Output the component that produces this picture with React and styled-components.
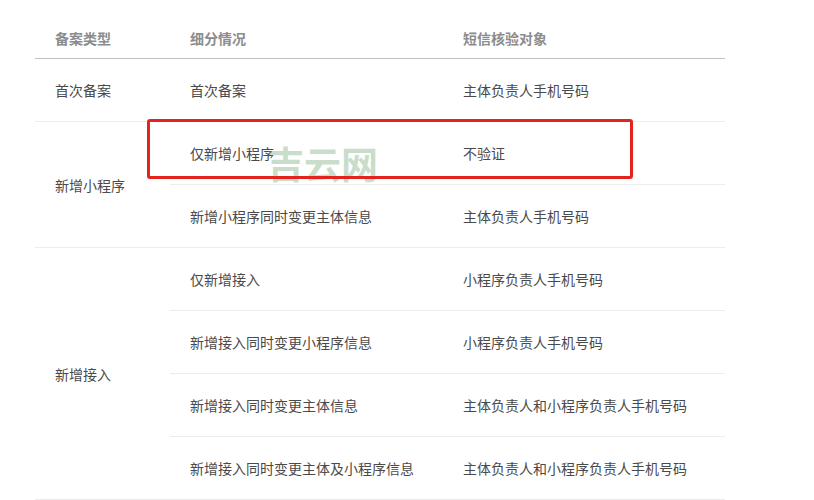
import React from "react";
import styled, { createGlobalStyle } from "styled-components";

const GlobalStyle = createGlobalStyle`
  html, body {
    margin: 0;
    padding: 0;
    background: #fff;
  }
  body {
    font-family: "Noto Sans CJK SC", "Microsoft YaHei", sans-serif;
    font-size: 14px;
    color: #4a4a4a;
  }
`;

const Page = styled.div`
  padding: 17px 89px 0 35px;
  width: 690px;
`;

const Header = styled.div`
  display: flex;
  height: 41px;
  align-items: center;
  border-bottom: 1px solid #bfbfbf;
  color: #8c8c8c;
  font-weight: 700;
`;

const HeadCell = styled.div`
  width: ${(p) => p.$w}px;
  padding-left: 20px;
  box-sizing: border-box;
`;

const Group = styled.div`
  display: flex;
  border-bottom: 1px solid #ececec;
`;

const GroupLabel = styled.div`
  width: 135px;
  padding-left: 20px;
  box-sizing: border-box;
  display: flex;
  align-items: center;
`;

const SubRows = styled.div`
  flex: 1;
  display: flex;
  flex-direction: column;
`;

const SubRow = styled.div`
  position: relative;
  display: flex;
  align-items: center;
  height: 62px;
  & + & {
    border-top: 1px solid #ececec;
  }
`;

const Cell = styled.div`
  width: ${(p) => p.$w}px;
  padding-left: 20px;
  box-sizing: border-box;
  white-space: nowrap;
`;

const Highlight = styled.div`
  position: absolute;
  left: -23px;
  top: -3px;
  width: 486px;
  height: 60px;
  box-sizing: border-box;
  border: 3px solid #e3241e;
  border-radius: 3px;
  pointer-events: none;
`;

const Watermark = styled.div`
  position: absolute;
  left: 97px;
  top: 21px;
  font-size: 37px;
  line-height: 40px;
  font-weight: 700;
  color: rgba(110, 165, 115, 0.38);
  pointer-events: none;
`;

const groups = [
  { label: "首次备案", rows: [["首次备案", "主体负责人手机号码"]] },
  {
    label: "新增小程序",
    rows: [
      ["仅新增小程序", "不验证", true],
      ["新增小程序同时变更主体信息", "主体负责人手机号码"],
    ],
  },
  {
    label: "新增接入",
    rows: [
      ["仅新增接入", "小程序负责人手机号码"],
      ["新增接入同时变更小程序信息", "小程序负责人手机号码"],
      ["新增接入同时变更主体信息", "主体负责人和小程序负责人手机号码"],
      ["新增接入同时变更主体及小程序信息", "主体负责人和小程序负责人手机号码"],
    ],
  },
];

export default function App() {
  return (
    <>
      <GlobalStyle />
      <Page>
        <Header>
          <HeadCell $w={135}>备案类型</HeadCell>
          <HeadCell $w={273}>细分情况</HeadCell>
          <HeadCell $w={282}>短信核验对象</HeadCell>
        </Header>
        {groups.map((g) => (
          <Group key={g.label}>
            <GroupLabel>{g.label}</GroupLabel>
            <SubRows>
              {g.rows.map(([sub, target, marked]) => (
                <SubRow key={sub}>
                  <Cell $w={273}>{sub}</Cell>
                  <Cell $w={282}>{target}</Cell>
                  {marked && (
                    <>
                      <Watermark>吉云网</Watermark>
                      <Highlight />
                    </>
                  )}
                </SubRow>
              ))}
            </SubRows>
          </Group>
        ))}
      </Page>
    </>
  );
}
